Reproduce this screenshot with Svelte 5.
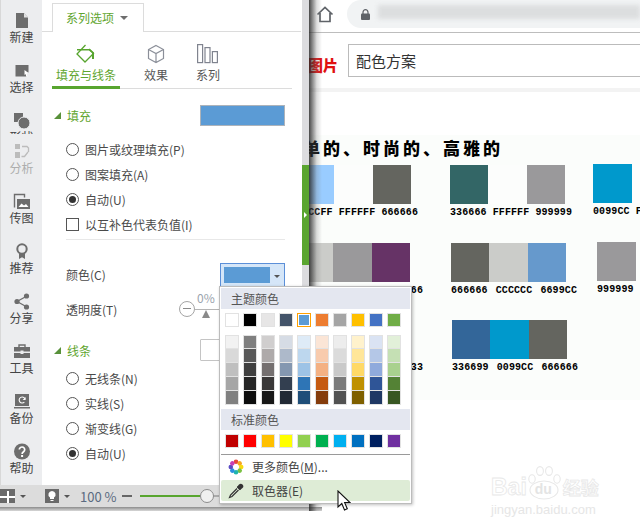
<script>
  const theme = ['#ffffff','#000000','#e7e6e6','#44546a','#5b9bd5','#ed7d31','#a5a5a5','#ffc000','#4472c4','#70ad47'];
  const tints = [
    ['#f2f2f2','#d9d9d9','#bfbfbf','#a6a6a6','#808080'],
    ['#7f7f7f','#595959','#404040','#262626','#0d0d0d'],
    ['#d0cece','#aeaaaa','#757070','#3a3838','#171717'],
    ['#d6dce5','#adb9ca','#8497b0','#333f50','#222a35'],
    ['#deebf7','#bdd7ee','#9dc3e6','#2e75b6','#1f4e79'],
    ['#fbe5d6','#f8cbad','#f4b183','#c55a11','#843c0c'],
    ['#ededed','#dbdbdb','#c9c9c9','#7b7b7b','#525252'],
    ['#fff2cc','#ffe699','#ffd966','#bf9000','#7f6000'],
    ['#dae3f3','#b4c7e7','#8faadc','#2f5597','#1f3864'],
    ['#e2f0d9','#c5e0b4','#a9d18e','#548235','#385723']
  ];
  const standard = ['#c00000','#ff0000','#ffc000','#ffff00','#92d050','#00b050','#00b0f0','#0070c0','#002060','#7030a0'];
  const wheel = ['#e8453c','#f5a623','#f8d90f','#7ac143','#1fb5ad','#2d8fe0','#5b4bc4','#c83fb4'];
  const rows = [
    { top: 0, wide: false, groups: [
      { left: 296, colors: ['#99ccff','#fcfdfc','#64655f'], label: '99CCFF FFFFFF 666666' },
      { left: 39, colors: ['#336666','#fcfdfc','#9a999b'], label: '336666 FFFFFF 999999' },
      { left: 28, lift: true, colors: ['#0099cc','#fcfdfc'], label: '0099CC FFFFFF' }
    ]},
    { top: 25, wide: true, groups: [
      { left: 295, colors: ['#cbccc9','#9a999b','#663366'], label: '999999 999999 666666' },
      { left: 41, colors: ['#64655f','#cbccc9','#6699cc'], label: '666666 CCCCCC 6699CC' },
      { left: 31, lift: true, colors: ['#9a999b'], label: '999999' }
    ]},
    { top: 24, wide: true, groups: [
      { left: 295, colors: ['#336699','#999999','#333333'], label: '336699 999999 333333' },
      { left: 42, colors: ['#336699','#0099cc','#64655f'], label: '336699 0099CC 666666' }
    ]}
  ];
</script>

<div class="stage">
  <div class="page">
    <div class="chrome">
      <svg class="home" width="18" height="17" viewBox="0 0 18 17"><path d="M1.5 8.5 9 1.5l7.5 7M4 7v8.5h10V7" fill="none" stroke="#5f6368" stroke-width="1.7"/></svg>
      <div class="url">
        <svg width="9" height="11" viewBox="0 0 9 11"><path d="M2 5V3.2a2.5 2.5 0 0 1 5 0V5" fill="none" stroke="#5f6368" stroke-width="1.2"/><rect y="4.6" width="9" height="6.4" rx="1" fill="#5f6368"/></svg>
        <div class="blur"></div>
      </div>
    </div>
    <div class="search">
      <span class="logo">图片</span>
      <div class="input">配色方案</div>
    </div>
    <div class="palette">
      <h2>简单的、时尚的、高雅的</h2>
      {#each rows as row}
        <div class="srow" class:wide={row.wide} style="margin-top:{row.top}px">
          {#each row.groups as g}
            <div class="group" class:lift={g.lift} style="margin-left:{g.left}px">
              <div class="chips">
                {#each g.colors as c}<i style="background:{c}"></i>{/each}
              </div>
              <div class="code">{g.label}</div>
            </div>
          {/each}
        </div>
      {/each}
    </div>
    <div class="mark">
      <div class="markline">
        <span class="bai">Bai</span>
        <div class="paw">
          <svg width="36" height="34" viewBox="0 0 36 34" fill="none" stroke="#e8e8e8" stroke-width="1.1">
            <ellipse cx="6" cy="13" rx="3.2" ry="4.3"/><ellipse cx="14" cy="5" rx="3.4" ry="4.4"/><ellipse cx="23" cy="5" rx="3.4" ry="4.4"/><ellipse cx="31" cy="13" rx="3.2" ry="4.3"/>
            <ellipse cx="18" cy="24" rx="14" ry="9"/>
          </svg>
          <span class="du">du</span>
        </div>
        <span class="jy">经验</span>
      </div>
      <div class="marksub">jingyan.baidu.com</div>
    </div>
  </div>

  <div class="window">
    <div class="upper">
      <nav class="rail">
        <div class="clip">
          <div class="tool">
            <svg width="16" height="17" viewBox="0 0 16 17"><path d="M2 1h8l4 4.5V16H2z" fill="#6d6d6d"/><path d="M10 1v4.5h4" fill="#fff" opacity=".8"/></svg>
            <span>新建</span>
          </div>
          <div class="tool">
            <svg width="16" height="17" viewBox="0 0 16 17"><path d="M1.5 3h13v7.5l-3 .5 1 3.500H1.500z" fill="#6d6d6d"/><path d="M10.500 8l4 3-2 .4 1 3-1 .3-1-2.800-1 1.100z" fill="#fff"/></svg>
            <span>选择</span>
          </div>
          <div class="tool">
            <svg width="16" height="17" viewBox="0 0 16 17"><rect x="0" y="1" width="9" height="9" fill="#6d6d6d"/><circle cx="10" cy="11" r="6" fill="#6d6d6d" stroke="#ecedef"/></svg>
            <span>形状</span>
          </div>
        </div>
        <div class="tool off">
          <svg width="16" height="17" viewBox="0 0 16 17" fill="#bcbcbc"><rect x="1" y="1" width="5" height="5"/><rect x="1" y="9" width="5" height="6"/><path d="M8 3.500h5l1.500 1.500V9" fill="none" stroke="#bcbcbc" stroke-width="1.300"/><path d="M14 9l-3.500 4.500H7.500" fill="none" stroke="#bcbcbc" stroke-width="1.300"/></svg>
          <span>分析</span>
        </div>
        <div class="tool">
          <svg width="18" height="17" viewBox="0 0 18 17"><path d="M1.500 14.500V1.500h10v3" fill="none" stroke="#6d6d6d" stroke-width="1.400"/><rect x="4" y="6" width="13" height="10" fill="#6d6d6d"/><path d="M5.500 14l3-3.500 2.500 2 2-1.500 2.500 3z" fill="#fff"/></svg>
          <span>传图</span>
        </div>
        <div class="tool">
          <svg width="14" height="17" viewBox="0 0 14 17"><path d="M4 10v6l3-1.800 3 1.800v-6" fill="#6d6d6d"/><circle cx="7" cy="6" r="4.700" fill="#ecedef" stroke="#6d6d6d" stroke-width="2"/></svg>
          <span>推荐</span>
        </div>
        <div class="tool">
          <svg width="16" height="17" viewBox="0 0 16 17" fill="#6d6d6d"><path d="M13 3 3 8.500l10 5.500" fill="none" stroke="#6d6d6d" stroke-width="1.300"/><circle cx="12.500" cy="3" r="2.600"/><circle cx="3" cy="8.500" r="2.600"/><circle cx="12.500" cy="14" r="2.600"/></svg>
          <span>分享</span>
        </div>
        <div class="tool">
          <svg width="16" height="17" viewBox="0 0 16 17"><path d="M5 4V2h6v2" fill="none" stroke="#6d6d6d" stroke-width="1.400"/><path d="M0 4h16v4.500H9.500v-1h-3v1H0zM0 10h6.500v1h3v-1H16v5H0z" fill="#6d6d6d"/></svg>
          <span>工具</span>
        </div>
        <div class="tool">
          <svg width="16" height="17" viewBox="0 0 16 17"><path d="M1 1h14v12H1zM0 14h16v1.500H0z" fill="#6d6d6d"/><path d="M11 6a3 3 0 1 0-.6 3" fill="none" stroke="#fff" stroke-width="1.100"/><path d="M11.600 4v3h-3z" fill="#fff"/></svg>
          <span>备份</span>
        </div>
        <div class="tool">
          <svg width="16" height="17" viewBox="0 0 16 17"><circle cx="8" cy="8.500" r="8" fill="#6d6d6d"/><path d="M5.300 6.600a2.700 2.600 0 1 1 4.300 2.100c-1 .7-1.500 1.100-1.500 2.200" fill="none" stroke="#fff" stroke-width="1.700"/><rect x="7.100" y="12" width="2" height="2" fill="#fff"/></svg>
          <span>帮助</span>
        </div>
      </nav>

      <section class="panel">
        <div class="tabs">
          <div class="tab">系列选项<b class="caret"></b></div>
        </div>
        <div class="subs">
          <div class="sub active">
            <svg width="20" height="20" viewBox="0 0 20 20"><path d="M9.500 1 1 10l8 8 8.500-8.500L13 5" fill="none" stroke="#58a52f" stroke-width="1.300"/><path d="M1 5h13l4 3.500V15h-2V9l-3-2.500H1z" fill="#58a52f"/></svg>
            <span>填充与线条</span>
          </div>
          <div class="sub">
            <svg width="18" height="20" viewBox="0 0 18 20" fill="none" stroke="#8b8f99" stroke-width="1.200"><path d="M9 1.500 16.500 5.500v9L9 18.500 1.500 14.500v-9zM1.500 5.500 9 9.500l7.500-4M9 9.500v9"/></svg>
            <span>效果</span>
          </div>
          <div class="sub">
            <svg width="22" height="20" viewBox="0 0 22 20" fill="none" stroke="#80848f" stroke-width="1.200"><rect x=".6" y=".6" width="5" height="18"/><rect x="8" y="3.600" width="5" height="15"/><rect x="15.400" y="7.600" width="5" height="11"/></svg>
            <span>系列</span>
          </div>
        </div>

        <div class="head">
          <b class="tri"></b><span>填充</span>
          <div class="fillbtn"></div>
        </div>
        <div class="opts">
          <label><i class="radio"></i>图片或纹理填充(P)</label>
          <label><i class="radio"></i>图案填充(A)</label>
          <label><i class="radio on"></i>自动(U)</label>
          <label><i class="check"></i>以互补色代表负值(I)</label>
        </div>
        <hr />
        <div class="prop color">
          <span>颜色(C)</span>
          <div class="drop"><i></i><b class="caret small"></b></div>
        </div>
        <div class="prop trans">
          <span>透明度(T)</span>
          <div class="slider">
            <div class="minus"></div>
            <div class="track"></div>
            <span class="pct">0%</span>
            <b class="knob"></b>
          </div>
        </div>
        <div class="head line">
          <b class="tri"></b><span>线条</span>
          <div class="linebtn"></div>
        </div>
        <div class="opts tight">
          <label><i class="radio"></i>无线条(N)</label>
          <label><i class="radio"></i>实线(S)</label>
          <label><i class="radio"></i>渐变线(G)</label>
          <label><i class="radio on"></i>自动(U)</label>
        </div>
      </section>

      <div class="scroll">
        <div class="thumb"><b></b></div>
      </div>
    </div>

    <footer class="status">
      <div class="sq">
        <svg width="15" height="14" viewBox="0 0 15 14"><rect width="15" height="14" fill="#6a6a6a"/><path d="M0 8h15M8 2v12" stroke="#fff" stroke-width="2"/></svg>
      </div>
      <b class="caret small st1"></b>
      <svg class="bulb" width="14" height="14" viewBox="0 0 14 14"><rect width="14" height="14" fill="#6a6a6a"/><path d="M7 2a3.600 3.600 0 0 1 2 6.600V10H5V8.600A3.600 3.600 0 0 1 7 2zM5.500 11h3v1h-3z" fill="#fff"/></svg>
      <b class="caret small st2"></b>
      <span class="zoomtxt">100 %</span>
      <i class="dash"></i>
      <div class="zoombar"><i class="fill"></i><i class="thumbdot"></i></div>
    </footer>
    <div class="under"></div>
  </div>

  <div class="menu">
    <div class="mhead">主题颜色</div>
    <div class="grid tm">
      {#each theme as c, i}
        <i class="cell" class:sel={i === 4} style="background:{c}"></i>
      {/each}
    </div>
    <div class="grid tn">
      {#each tints as col}
        <div class="col">
          {#each col as c}<i style="background:{c}"></i>{/each}
        </div>
      {/each}
    </div>
    <div class="mhead second">标准颜色</div>
    <div class="grid tm">
      {#each standard as c}
        <i class="cell" style="background:{c}"></i>
      {/each}
    </div>
    <div class="sep"></div>
    <div class="item">
      <svg width="16" height="16" viewBox="0 0 16 16">
        {#each wheel as c, i}
          <circle cx="8" cy="2.800" r="2.300" fill={c} transform="rotate({i * 45} 8 8)" />
        {/each}
      </svg>
      <span>更多颜色(<u>M</u>)...</span>
    </div>
    <div class="item pick">
      <svg width="16" height="16" viewBox="0 0 16 16"><path d="M9.500 3.500 12.500 6.500" stroke="#333" stroke-width="2"/><path d="M11 1.500a1.800 1.800 0 0 1 3.500 3.500L12 7 9 4z" fill="#333"/><path d="M9 5.500 2.500 12l-1 2.500 2.500-1L10.500 7" fill="none" stroke="#333" stroke-width="1.200"/></svg>
      <span>取色器(E)</span>
    </div>
  </div>

  <svg class="cursor" width="14" height="22" viewBox="0 0 14 22"><path d="M1 1v16l3.800-3.500 2.700 6.500 2.800-1.200-2.700-6.300H13z" fill="#fff" stroke="#111" stroke-width="1.100"/></svg>
</div>

<style>
  :global(body) { margin: 0; background: #fff; }
  * { box-sizing: border-box; }
  .stage {
    position: relative;
    width: 640px;
    height: 531px;
    overflow: hidden;
    font-family: "Noto Sans CJK SC", "Noto Sans", sans-serif;
    font-size: 12px;
    color: #444;
    background: #fff;
  }
  i, b { display: block; font-style: normal; }

  /* page behind */
  .page { width: 640px; height: 531px; }
  .chrome {
    height: 33px;
    border-bottom: 1px solid #bdbdbd;
    display: flex;
    align-items: flex-start;
    padding-left: 316px;
  }
  .home { margin-top: 6px; }
  .url {
    margin-left: 13px;
    flex: 1;
    height: 28px;
    background: #f1f3f4;
    border-radius: 14px 0 0 14px;
    display: flex;
    align-items: center;
    padding-left: 14px;
    overflow: hidden;
  }
  .blur {
    flex: 1;
    height: 14px;
    margin: -4px 0 0 8px;
    background: #dcdedf;
    filter: blur(2px);
  }
  .search {
    height: 59px;
    border-bottom: 4px solid #f3f3f3;
    display: flex;
    padding: 11px 0 0 308px;
  }
  .logo {
    width: 40px;
    padding-top: 4px;
    font-size: 15px;
    font-weight: 900;
    color: #e01010;
    line-height: 34px;
  }
  .input {
    flex: 1;
    height: 33px;
    border: 1px solid #bbb;
    border-right: 0;
    font-size: 15px;
    line-height: 31px;
    padding-left: 7px;
    color: #333;
  }
  .palette {
    margin-top: 43px;
    height: 265px;
    background: #fbfdfb;
    padding-top: 3px;
  }
  h2 {
    margin: 0 0 0 283px;
    height: 27px;
    font-size: 17px;
    font-weight: 900;
    line-height: 19px;
    letter-spacing: 3px;
    color: #000;
  }
  .srow { display: flex; align-items: flex-start; }
  .group { width: 115px; flex: none; }
  .group.lift { margin-top: -1px; }
  .chips { display: flex; height: 39px; }
  .chips i { width: 38.500px; }
  .code {
    margin-top: 3px;
    height: 11px;
    white-space: nowrap;
    font-family: "Liberation Mono", monospace;
    font-size: 10px;
    font-weight: 700;
    line-height: 11px;
    letter-spacing: .1px;
    color: #000;
  }
  .wide .code { word-spacing: 2px; }
  .wide .group:first-child .code { margin-left: 2px; }
  .mark { position: absolute; left: 491px; top: 463px; width: 118px; }
  .markline { display: flex; align-items: flex-end; height: 37px; }
  .bai, .jy {
    -webkit-text-stroke: .8px #e8e8e8;
    font-family: "Liberation Sans", sans-serif;
    font-size: 23px;
    font-weight: 700;
    line-height: 26px;
    color: #fff;
  }
  .paw { position: relative; width: 36px; height: 34px; margin-left: -1px; flex: none; }
  .du {
    position: absolute;
    left: 9px;
    top: 16px;
    font-family: "Liberation Sans", sans-serif;
    font-size: 14px;
    font-weight: 700;
    line-height: 15px;
    color: #e4e4e4;
  }
  .jy { font-family: "Noto Sans CJK SC", sans-serif; font-size: 18px; margin-left: 1px; }
  .marksub { margin-top: 3px; font-family: "Liberation Sans", sans-serif; font-size: 13px; line-height: 14px; color: #e6e6e6; white-space: nowrap; }

  /* office window */
  .window {
    position: absolute;
    left: 0;
    top: 0;
    width: 309px;
    height: 511px;
    display: flex;
    flex-direction: column;
    background: #fff;
  }
  .window::after {
    content: "";
    position: absolute;
    left: 309px;
    top: 0;
    width: 13px;
    height: 511px;
    background: linear-gradient(to right, rgba(40,40,40,.85), rgba(120,120,120,.25) 60%, rgba(255,255,255,0));
  }
  .upper { display: flex; height: 485px; }
  .rail {
    width: 42px;
    flex: none;
    background: #ecedef;
    border-left: 1px solid #d8d8d8;
    padding-top: 12px;
    color: #444;
  }
  .clip { height: 122px; margin-bottom: 9px; overflow: hidden; }
  .tool {
    height: 50px;
    display: flex;
    flex-direction: column;
    align-items: center;
  }
  .tool svg { height: 17px; flex: none; }
  .tool span { line-height: 16px; margin-top: 0; font-size: 12px; }
  .tool.off { color: #adadad; }

  .panel { width: 260px; flex: none; padding-top: 3px; position: relative; }
  .tabs {
    height: 29px;
    margin-right: 1px;
    padding-left: 10px;
    border-bottom: 1px solid #dcdcdc;
  }
  .tab {
    width: 92px;
    height: 29px;
    background: #fff;
    border: 1px solid #dcdcdc;
    border-bottom: 0;
    padding-left: 13px;
    color: #5fa52f;
    line-height: 28px;
    display: flex;
    align-items: center;
    gap: 6px;
  }
  .caret {
    width: 0; height: 0;
    border-left: 4px solid transparent;
    border-right: 4px solid transparent;
    border-top: 4px solid #6e6e6e;
  }
  .caret.small { border-width: 3px 3px 0; border-top-color: #555; }
  .subs {
    width: 240px;
    margin-left: 10px;
    height: 57px;
    display: flex;
    border-bottom: 1px solid #dcdcdc;
    align-items: flex-start;
    padding-top: 12px;
  }
  .sub {
    height: 45px;
    display: flex;
    flex-direction: column;
    align-items: center;
    color: #555;
  }
  .sub svg { flex: none; margin-bottom: 2px; }
  .sub span { line-height: 17px; }
  .sub:nth-child(1) { width: 68px; color: #5fa52f; border-bottom: 3px solid #58a52f; margin-bottom: -1px; }
  .sub:nth-child(2) { width: 36px; margin-left: 18px; }
  .sub:nth-child(3) { width: 36px; margin-left: 16px; }

  .head {
    margin: 14px 0 0 12px;
    height: 24px;
    display: flex;
    align-items: center;
    color: #5fa52f;
  }
  .tri {
    width: 0; height: 0;
    border-bottom: 7px solid #58913a;
    border-left: 7px solid transparent;
    margin-right: 6px;
  }
  .fillbtn {
    margin-left: 109px;
    width: 85px;
    height: 21px;
    background: #5b9bd5;
    border: 1px solid #adb3ba;
  }
  .head.line { margin-top: 17px; }
  .linebtn {
    margin-left: 109px;
    width: 30px;
    height: 22px;
    border: 1px solid #c4c4c4;
    border-radius: 1px;
  }
  .opts { margin: 10px 0 0 24px; }
  .opts.tight { margin-top: 4px; }
  .opts label { height: 25px; display: flex; align-items: center; color: #4a4a4a; }
  .radio {
    width: 13px; height: 13px;
    border: 1px solid #555;
    border-radius: 50%;
    margin-right: 6px;
    position: relative;
  }
  .radio.on::after {
    content: "";
    position: absolute;
    inset: 2px;
    background: #333;
    border-radius: 50%;
  }
  .check { width: 13px; height: 13px; border: 1px solid #555; margin-right: 6px; }
  hr {
    border: 0;
    height: 1px;
    background: #e8e8e8;
    margin: 2px 17px 0 24px;
  }
  .prop { margin: 22px 0 0 24px; height: 24px; display: flex; align-items: center; color: #4a4a4a; }
  .prop > span { width: 154px; }
  .drop {
    width: 65px;
    height: 24px;
    margin-top: 2px;
    background: #d5e6f8;
    border: 1px solid #5b8fd8;
    padding: 3px 0 0 3px;
    display: flex;
  }
  .drop i { width: 46px; height: 16px; background: #5b9bd5; }
  .drop .caret { margin: 8px 0 0 4px; }
  .prop.trans { margin-top: 11px; }
  .prop.trans > span { width: 113px; }
  .slider { position: relative; width: 60px; height: 24px; display: flex; align-items: center; }
  .minus {
    width: 16px; height: 16px;
    border: 1px solid #a5a5a5;
    border-radius: 50%;
    position: relative;
  }
  .minus::after {
    content: "";
    position: absolute;
    left: 3px; right: 3px; top: 6px;
    height: 1px;
    background: #8a8a8a;
  }
  .track { width: 30px; height: 1px; background: #b5b5b5; }
  .pct { position: absolute; left: 18px; top: -8px; color: #9aa3ad; }
  .knob {
    position: absolute;
    left: 23px; top: 13px;
    width: 0; height: 0;
    border-left: 4px solid transparent;
    border-right: 4px solid transparent;
    border-bottom: 8px solid #8a8a8a;
  }

  .scroll { width: 7px; flex: none; background: #dcdcdf; padding-top: 165px; }
  .thumb { width: 7px; height: 100px; background: #5aa530; position: relative; }
  .thumb b {
    position: absolute;
    left: 2px; top: 47px;
    width: 0; height: 0;
    border-left: 3px solid #fff;
    border-top: 3px solid transparent;
    border-bottom: 3px solid transparent;
  }

  .status {
    height: 22px;
    flex: none;
    background: #dcdcdc;
    display: flex;
    align-items: center;
    position: relative;
  }
  .sq { width: 15px; height: 14px; }
  .st1 { margin-left: 5px; }
  .bulb { margin-left: 19px; }
  .st2 { margin-left: 5px; }
  .zoomtxt { margin-left: 10px; font-size: 13px; color: #5a6a80; white-space: nowrap; width: 42px; }
  .dash { width: 10px; height: 2px; background: #666; }
  .zoombar { width: 79px; margin-left: 8px; height: 2px; background: #aaa; position: relative; }
  .zoombar .fill { width: 60px; height: 2px; background: #58a52f; }
  .thumbdot {
    position: absolute;
    left: 60px; top: -6px;
    width: 14px; height: 14px;
    border-radius: 50%;
    background: #f0f0f0;
    border: 1px solid #8c8c8c;
  }
  .under {
    height: 4px;
    flex: none;
    background: linear-gradient(#8c8c8c, #d8d8d8);
    margin-right: -13px;
  }

  /* colour menu */
  .menu {
    position: absolute;
    left: 219px;
    top: 286px;
    width: 193px;
    height: 218px;
    background: #fff;
    border: 1px solid #bcbcbc;
    box-shadow: 1px 1px 3px rgba(0,0,0,.25);
    padding: 1px;
    color: #555;
  }
  .mhead {
    height: 21px;
    background: #e4e7f0;
    padding-left: 10px;
    line-height: 21px;
  }
  .mhead.second { margin-top: 4px; }
  .grid {
    display: grid;
    grid-template-columns: repeat(10, 14px);
    column-gap: 4px;
    padding-left: 4px;
  }
  .tm { margin-top: 4px; }
  .tn { margin-top: 8px; }
  .cell { height: 14px; border: 1px solid #e2e2e2; }
  .cell.sel { border: 1px solid #ffa000; box-shadow: inset 0 0 0 1px #fff; }
  .col i { height: 14px; border: 1px solid #e2e2e2; border-top: 0; }
  .col i:first-child { border-top: 1px solid #e2e2e2; }
  .sep { height: 1px; background: #9a9a9a; margin-top: 6px; }
  .item {
    height: 23px;
    display: flex;
    align-items: center;
    padding-left: 7px;
    gap: 8px;
    color: #444;
  }
  .item svg { flex: none; }
  .item.pick { height: 21px; margin-top: 2px; background: #deecd6; border-radius: 2px; }

  .cursor { position: absolute; left: 337px; top: 490px; }
</style>
